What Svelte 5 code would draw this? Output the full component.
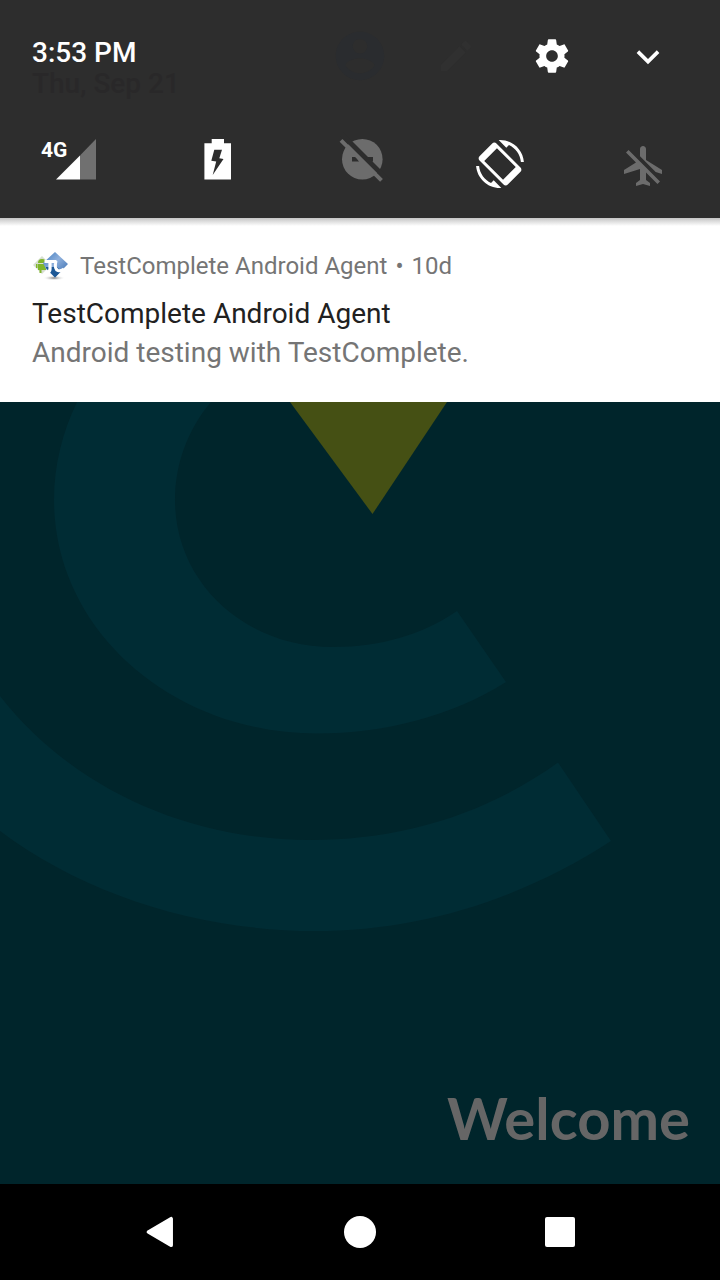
<script>
  const notification = {
    app: 'TestComplete Android Agent',
    age: '10d',
    title: 'TestComplete Android Agent',
    text: 'Android testing with TestComplete.'
  };
</script>

<main class="screen">
  <header class="panel">
    <div class="status">
      <div class="clock">
        <time class="time">3:53 PM</time>
        <span class="date">Thu, Sep 21</span>
      </div>
      <div class="actions">
        <button class="action user" aria-label="User">
          <svg width="58" height="58" viewBox="0 0 24 24"><path d="M12 2C6.480 2 2 6.480 2 12s4.480 10 10 10 10-4.480 10-10S17.520 2 12 2zm0 3c1.660 0 3 1.340 3 3s-1.340 3-3 3-3-1.340-3-3 1.340-3 3-3zm0 14.200c-2.500 0-4.710-1.280-6-3.220.03-1.990 4-3.080 6-3.080 1.990 0 5.970 1.090 6 3.080-1.290 1.940-3.500 3.220-6 3.220z" /></svg>
        </button>
        <button class="action edit" aria-label="Edit">
          <svg width="40" height="40" viewBox="0 0 24 24"><path d="M3 17.250V21h3.750L17.810 9.940l-3.750-3.750L3 17.250zM20.710 7.040c.39-.39.39-1.020 0-1.410l-2.340-2.340c-.39-.39-1.020-.39-1.410 0l-1.830 1.830 3.750 3.750 1.830-1.830z" /></svg>
        </button>
        <button class="action" aria-label="Settings">
          <svg width="40" height="40" viewBox="0 0 24 24"><path d="M19.430 12.980c.04-.32.07-.64.07-.98s-.03-.66-.07-.98l2.110-1.650c.19-.15.24-.42.12-.64l-2-3.460c-.12-.22-.39-.3-.61-.22l-2.490 1c-.52-.4-1.080-.73-1.690-.98l-.38-2.650C14.460 2.180 14.250 2 14 2h-4c-.25 0-.46.18-.49.42l-.38 2.650c-.61.25-1.170.59-1.690.98l-2.490-1c-.23-.09-.49 0-.61.22l-2 3.460c-.13.22-.07.49.12.64l2.110 1.650c-.04.32-.07.65-.07.98s.03.66.07.98l-2.110 1.650c-.19.15-.24.42-.12.64l2 3.460c.12.22.39.3.61.22l2.490-1c.52.4 1.080.73 1.690.98l.38 2.650c.03.24.24.42.49.42h4c.25 0 .46-.18.49-.42l.38-2.650c.61-.25 1.170-.59 1.690-.98l2.490 1c.23.09.49 0 .61-.22l2-3.460c.12-.22.07-.49-.12-.64l-2.110-1.650zM12 15.500c-1.930 0-3.500-1.570-3.500-3.500s1.570-3.500 3.500-3.500 3.500 1.570 3.500 3.500-1.570 3.500-3.500 3.500z" /></svg>
        </button>
        <button class="action" aria-label="Expand">
          <svg width="44" height="44" viewBox="0 0 24 24"><path d="M16.800 8.800L12 13.600 7.200 8.800 5.800 10.300l6.200 6.200 6.200-6.200z" /></svg>
        </button>
      </div>
    </div>

    <div class="tiles">
      <button class="tile" aria-label="Mobile network">
        <svg width="72" height="64" viewBox="36 132 72 64">
          <text class="network" x="41" y="157">4G</text>
          <path d="M80 155.400L96 139V179.500H80z" opacity=".32" />
          <path d="M56 179.500L80 155.400V179.500z" />
        </svg>
      </button>
      <button class="tile" aria-label="Battery">
        <svg width="72" height="64" viewBox="180 132 72 64">
          <path fill-rule="evenodd" d="M211.700 139H224V143.300H231V179.600H204.400V143.300H211.700zM214.300 149.700L211.300 160.700L216.200 161.400L212.700 175L223.500 158.900L219.300 158.200L222 149.700z" />
        </svg>
      </button>
      <button class="tile off" aria-label="Do not disturb">
        <svg width="72" height="64" viewBox="324 132 72 64">
          <circle cx="362.300" cy="159.200" r="20.300" />
          <path class="cut" d="M352 157H356L359 161.400H352zM364 157H373V161.400H368z" />
          <path class="gap" d="M342 134.500L388 180.500" />
          <path class="slash" d="M341 140.300L381.500 180.300" />
        </svg>
      </button>
      <button class="tile" aria-label="Auto-rotate">
        <svg width="72" height="64" viewBox="468 132 72 64">
          <g class="rotate" transform="translate(476 140) scale(2)">
            <path d="M16.480 2.520c3.270 1.550 5.610 4.720 5.970 8.480h1.500C23.440 4.840 18.290 0 12 0l-.66.03 3.810 3.810 1.330-1.320zM7.520 21.480C4.250 19.940 1.910 16.760 1.550 13H.05C.56 19.160 5.710 24 12 24l.66-.03-3.810-3.810-1.330 1.320z" />
            <path fill-rule="evenodd" d="M10.230 1.750c-.59-.59-1.540-.59-2.120 0L1.750 8.110c-.59.59-.59 1.540 0 2.120l12.020 12.020c.59.59 1.540.59 2.120 0l6.360-6.360c.59-.59.59-1.540 0-2.120zM10.480 4.120L19.880 13.520L13.520 19.880L4.120 10.480z" />
          </g>
        </svg>
      </button>
      <button class="tile off" aria-label="Airplane mode">
        <svg width="72" height="64" viewBox="612 132 72 64">
          <path transform="translate(620 142) scale(2)" d="M13 9V3.500c0-.83-.67-1.500-1.500-1.500S10 2.670 10 3.500v3.680l7.830 7.830L21 16v-2l-8-5zM3 5.270l4.990 4.990L2 14v2l8-2.500V19l-2 1.500V22l3.500-1 3.500 1v-1.500L13 19v-3.730L18.730 21 20 19.730 4.270 4 3 5.270z" />
        </svg>
      </button>
    </div>
  </header>

  <article class="notification">
    <div class="source">
      <svg class="logo" width="36" height="32" viewBox="0 0 36 32" aria-hidden="true">
        <defs>
          <linearGradient id="blue" x1="0" y1="0" x2="1" y2="1">
            <stop offset="0" stop-color="#3c79bd" />
            <stop offset=".45" stop-color="#8fb0dc" />
            <stop offset="1" stop-color="#2a62a8" />
          </linearGradient>
          <radialGradient id="shade">
            <stop offset="0" stop-color="#777" />
            <stop offset="1" stop-color="#fff" stop-opacity="0" />
          </radialGradient>
        </defs>
        <ellipse cx="22" cy="28" rx="11" ry="2.600" fill="url(#shade)" />
        <path d="M1 15L10 6L19 15L10 24z" fill="#d7dfd2" />
        <path d="M6 13a4 4 0 0 1 8 0zM6 14h8v6H6zM4 14h1.500v4H4zM7.500 20h2v3h-2z" fill="#80b52b" />
        <path d="M23 2L36 14L29 21L23 27.500L14 19L11 13z" fill="url(#blue)" />
        <path d="M14 18L23 27.500L29.500 21L25 17H14z" fill="#1c5795" />
        <path d="M12.500 11.500H24.500M18 11.500V19Q18 22 15 22" fill="none" stroke="#fff" stroke-width="3.200" />
        <path d="M24 11Q22 19 26 20.500Q29 21.500 32 19" fill="none" stroke="#fff" stroke-width="3" />
      </svg>
      <div class="meta">
        <span>{notification.app}</span>
        <span>•</span>
        <span>{notification.age}</span>
      </div>
    </div>
    <h1>{notification.title}</h1>
    <p>{notification.text}</p>
  </article>

  <section class="wallpaper">
    <svg class="art" viewBox="0 402 720 782" preserveAspectRatio="xMidYMin slice" aria-hidden="true">
      <path class="ring" d="M77 402C62 433 54 466 54 500C54 630 172 733.500 317 733.500C385 733.500 452 716 506 682L457 611C422 635 380 647 333 647C244 647 175 582 175 500C175 464 188 429 211 402z" />
      <path class="ring" d="M0 696C70 786 185 840 310 840C400 840 485 815 558 762.500L611 841C520 900 420 931 315 931C200 931 85 895 0 831z" />
      <path class="wedge" d="M290 402H447L372.500 514z" />
    </svg>
    <span class="welcome">Welcome</span>
  </section>

  <nav class="navbar">
    <button aria-label="Back">
      <svg width="40" height="40" viewBox="0 0 40 40"><path d="M8 20L32 6V34z" stroke="#fff" stroke-width="4" stroke-linejoin="round" transform="translate(1 1.200) scale(.94)" /></svg>
    </button>
    <button aria-label="Home">
      <svg width="40" height="40" viewBox="0 0 40 40"><circle cx="20" cy="20" r="16" /></svg>
    </button>
    <button aria-label="Overview">
      <svg width="40" height="40" viewBox="0 0 40 40"><rect x="5" y="5" width="30" height="30" rx="2" /></svg>
    </button>
  </nav>
</main>

<style>
  :global(body) {
    margin: 0;
    background: #000;
  }

  .screen {
    display: flex;
    flex-direction: column;
    min-height: 100vh;
    font-family: Roboto, "Liberation Sans", sans-serif;
  }

  button {
    display: grid;
    place-items: center;
    padding: 0;
    border: 0;
    background: none;
    color: #fff;
    font-family: inherit;
  }

  svg {
    display: block;
    fill: currentColor;
  }

  .panel {
    padding-bottom: 22px;
    background: #2d2d2d;
    color: #fff;
  }

  .status {
    display: flex;
    justify-content: space-between;
    height: 112px;
    padding: 0 24px 0 32px;
  }

  .clock {
    display: flex;
    flex-direction: column;
    padding-top: 37px;
    font-size: 28px;
    font-weight: 500;
    line-height: 31px;
    white-space: nowrap;
  }

  .date {
    color: #292829;
  }

  .actions {
    display: flex;
  }

  .action {
    width: 96px;
  }

  .user {
    color: #2a2c2f;
  }

  .edit {
    color: #303030;
  }

  .tiles {
    display: grid;
    grid-template-columns: repeat(5, 1fr);
    padding-top: 20px;
  }

  .off {
    color: #6c6c6c;
  }

  .network {
    font-size: 21px;
    font-weight: 700;
  }

  .cut {
    fill: #2d2d2d;
  }

  .gap {
    stroke: #2d2d2d;
    stroke-width: 5px;
  }

  .slash {
    stroke: currentColor;
    stroke-width: 4px;
  }

  .notification {
    padding: 32px 32px 30px;
    background: linear-gradient(#c4c4c4, #fff 8px);
    color: #757575;
    font-size: 28px;
  }

  .source {
    display: flex;
    align-items: center;
    gap: 12px;
    height: 32px;
    font-size: 24px;
  }

  .meta {
    display: flex;
    gap: 8px;
  }

  h1 {
    margin: 12px 0 0;
    color: #212121;
    font-size: 28px;
    font-weight: 400;
    line-height: 39px;
  }

  p {
    margin: 0;
    line-height: 39px;
  }

  .wallpaper {
    display: grid;
    flex: 1;
    background: #00252b;
  }

  .art,
  .welcome {
    grid-area: 1 / 1;
  }

  .art {
    width: 100%;
    height: 100%;
  }

  .ring {
    fill: #002c34;
  }

  .wedge {
    fill: #455014;
  }

  .welcome {
    place-self: end;
    padding: 0 30px 34px 0;
    color: #666;
    font: 700 58px/64px Lato, sans-serif;
  }

  .navbar {
    display: flex;
    justify-content: center;
    gap: 120px;
    height: 96px;
    background: #000;
  }

  .navbar button {
    width: 80px;
  }
</style>
